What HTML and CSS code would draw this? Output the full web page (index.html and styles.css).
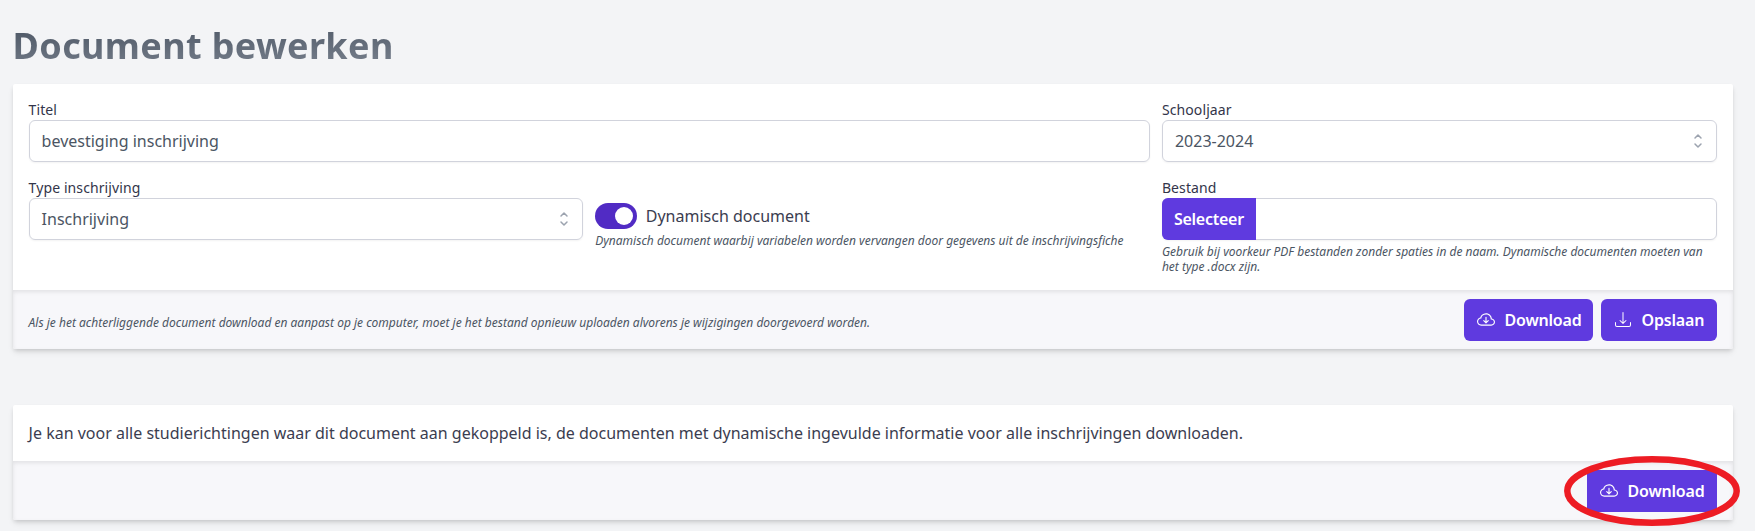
FILE: index.html
```html
<!DOCTYPE html>
<html lang="nl">
<head>
<meta charset="utf-8">
<title>Document bewerken</title>
<link rel="stylesheet" href="styles.css">
</head>
<body>
<svg width="0" height="0" class="sprite" aria-hidden="true">
  <symbol id="cloud" viewBox="0 0 16 16">
    <path fill-rule="evenodd" d="M7.646 10.854a.5.5 0 0 0 .708 0l2-2a.5.5 0 0 0-.708-.708L8.5 9.293V5.5a.5.5 0 0 0-1 0v3.793L6.354 8.146a.5.5 0 1 0-.708.708z"/>
    <path d="M4.406 3.342A5.53 5.53 0 0 1 8 2c2.69 0 4.923 2 5.166 4.579C14.758 6.804 16 8.137 16 9.773 16 11.569 14.502 13 12.687 13H3.781C1.708 13 0 11.366 0 9.318c0-1.763 1.266-3.223 2.942-3.593.143-.863.698-1.723 1.464-2.383m.653.757c-.757.653-1.153 1.44-1.153 2.056v.448l-.445.049C2.064 6.805 1 7.952 1 9.318 1 10.785 2.23 12 3.781 12h8.906C13.98 12 15 10.988 15 9.773c0-1.216-1.02-2.228-2.313-2.228h-.5v-.5C12.188 4.825 10.328 3 8 3a4.53 4.53 0 0 0-2.941 1.1z"/>
  </symbol>
  <symbol id="save" viewBox="0 0 16 16">
    <path d="M.5 9.9a.5.5 0 0 1 .5.5v2.5a1 1 0 0 0 1 1h12a1 1 0 0 0 1-1v-2.5a.5.5 0 0 1 1 0v2.5a2 2 0 0 1-2 2H2a2 2 0 0 1-2-2v-2.5a.5.5 0 0 1 .5-.5"/>
    <path d="M7.646 11.854a.5.5 0 0 0 .708 0l3-3a.5.5 0 0 0-.708-.708L8.5 10.293V.5a.5.5 0 0 0-1 0v9.793L5.354 8.146a.5.5 0 1 0-.708.708z"/>
  </symbol>
  <symbol id="updown" viewBox="0 0 20 20">
    <path d="M7 7l3-3 3 3m0 6l-3 3-3-3" fill="none" stroke="#9ca3af" stroke-width="1.5" stroke-linecap="round" stroke-linejoin="round"/>
  </symbol>
</svg>
<main class="page">
  <h1 class="title">Document bewerken</h1>
  <section class="card">
    <div class="fields">
      <div class="field wide"><label class="label">Titel</label><div class="control">bevestiging inschrijving</div></div>
      <div class="field"><label class="label">Schooljaar</label><div class="control">2023-2024<svg class="arrows"><use href="#updown"/></svg></div></div>
      <div class="field"><label class="label">Type inschrijving</label><div class="control">Inschrijving<svg class="arrows"><use href="#updown"/></svg></div></div>
      <div class="field toggle-field">
        <div class="toggle-row"><span class="toggle"><span class="knob"></span></span><span>Dynamisch document</span></div>
        <p class="hint">Dynamisch document waarbij variabelen worden vervangen door gegevens uit de inschrijvingsfiche</p>
      </div>
      <div class="field"><label class="label">Bestand</label><div class="control file"><span class="select">Selecteer</span></div>
        <p class="hint file-hint">Gebruik bij voorkeur PDF bestanden zonder spaties in de naam. Dynamische documenten moeten van het type .docx zijn.</p></div>
    </div>
    <div class="footer">
      <p class="hint note">Als je het achterliggende document download en aanpast op je computer, moet je het bestand opnieuw uploaden alvorens je wijzigingen doorgevoerd worden.</p>
      <div class="actions">
        <button class="btn download"><svg class="icon"><use href="#cloud"/></svg>Download</button>
        <button class="btn save"><svg class="icon"><use href="#save"/></svg>Opslaan</button>
      </div>
    </div>
  </section>
  <section class="card second">
    <p class="message">Je kan voor alle studierichtingen waar dit document aan gekoppeld is, de documenten met dynamische ingevulde informatie voor alle inschrijvingen downloaden.</p>
    <div class="footer">
      <div class="actions marked">
        <button class="btn download square"><svg class="icon"><use href="#cloud"/></svg>Download</button>
        <svg class="ring" viewBox="0 0 176 70"><ellipse cx="88" cy="35" rx="84.7" ry="31.7"/></svg>
      </div>
    </div>
  </section>
</main>
</body>
</html>
```

FILE: styles.css
```css
* { box-sizing: border-box; }
body { margin: 0; background: #f3f4f6; color: #3b3d50; font: 16px/24px "Noto Sans", sans-serif; }
p { margin: 0; }
.sprite { position: absolute; }
.page { width: 1720px; height: 531px; margin-left: 12.6px; padding-top: 24px; }
.title {
  margin: 0 0 12px; padding-bottom: 4px;
  font-size: 36px; line-height: 44px; font-weight: 700; letter-spacing: .36px;
  background: linear-gradient(to bottom right, #4b5563, #9ca3af);
  background-clip: text; -webkit-background-clip: text; color: transparent;
}
.card { background: #fff; border-radius: 2px; box-shadow: 0 4px 6px -1px rgba(0,0,0,.1), 0 2px 4px -1px rgba(0,0,0,.12); }
.second { margin-top: 56px; }
.fields { display: grid; grid-template-columns: repeat(3, 1fr); gap: 16px 12px; padding: 16px; }
.wide { grid-column: span 2; }
.label { display: block; font-size: 14px; line-height: 20px; letter-spacing: .1px; color: #33354a; }
.control {
  display: flex; align-items: center; justify-content: space-between;
  height: 42px; padding: 0 8px 0 12px; border: 1px solid #d1d3dc; border-radius: 6px;
  color: #4b5563; box-shadow: 0 1px 2px rgba(0,0,0,.05);
}
.arrows { width: 20px; height: 20px; }
.file { padding: 0; }
.select { width: 94px; margin: -1px 0 -1px -1px; padding: 9px 12px; border-radius: 6px 0 0 6px; background: #5f3adf; color: #fff; font-weight: 600; letter-spacing: -.25px; }
.hint { font-size: 12px; line-height: 15px; font-style: italic; color: #4b5563; }
.file-hint { margin-top: 4px; }
.toggle-field { padding-top: 25px; }
.toggle-row { display: flex; align-items: center; gap: 8.5px; height: 26px; }
.toggle { display: flex; justify-content: flex-end; width: 42px; height: 26px; padding: 4px; border-radius: 13px; background: #512bc4; }
.knob { width: 18px; height: 18px; border-radius: 50%; background: #fff; }
.toggle-field .hint { margin-top: 4px; white-space: nowrap; }
.footer {
  display: flex; align-items: center; height: 59px; padding: 9px 16px 8px;
  background: #f7f7fa; border-radius: 0 0 2px 2px;
  box-shadow: inset 0 2px 4px rgba(0,0,0,.09);
}
.note { padding-top: 5px; }
.actions { display: flex; gap: 8px; margin-left: auto; }
.btn {
  display: flex; align-items: center; gap: 10px; height: 42px; padding: 0 0 0 13px;
  border: 0; border-radius: 6px; background: #5f3adf; color: #fff;
  font: 600 16px/24px "Noto Sans", sans-serif; letter-spacing: -.2px;
}
.download { width: 129px; }
.save { width: 116px; gap: 11px; padding-left: 14px; }
.square { width: 130px; border-radius: 0; }
.icon { width: 18px; height: 18px; fill: currentColor; }
.save .icon { width: 16px; height: 16px; }
.message { padding: 16px; }
.marked { position: relative; }
.ring { position: absolute; left: -22.5px; top: -14.5px; width: 176px; height: 70px; }
.ring ellipse { fill: none; stroke: #ed1c24; stroke-width: 6.5; }
```
